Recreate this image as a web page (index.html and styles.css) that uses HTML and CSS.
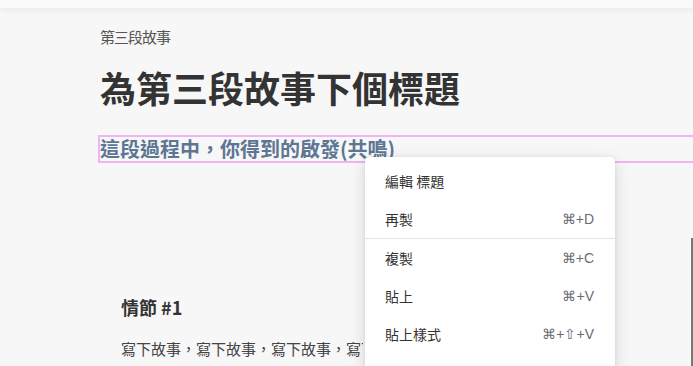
FILE: index.html
```html
<!DOCTYPE html>
<html lang="zh-Hant">
<head>
    <meta charset="UTF-8">
    <meta name="viewport" content="width=device-width, initial-scale=1.0">
    <title>故事編輯器</title>
    <link rel="stylesheet" href="styles.css">
</head>
<body>
    <div class="topbar"></div>

    <main class="story">
        <div class="section-label">第三段故事</div>
        <h1 class="story-title">為第三段故事下個標題</h1>
        <div class="subtitle-box">
            <h2 class="story-subtitle">這段過程中，你得到的啟發(共鳴)</h2>
        </div>

        <div class="plot">
            <h3 class="plot-title">情節 #1</h3>
            <p class="plot-text">寫下故事，寫下故事，寫下故事，寫下故事，寫下故事</p>
        </div>
    </main>

    <div class="side-panel"></div>

    <!-- Context menu -->
    <ul class="context-menu">
        <li class="menu-item"><span>編輯 標題</span></li>
        <li class="menu-item"><span>再製</span><span class="shortcut">⌘+D</span></li>
        <li class="menu-divider"></li>
        <li class="menu-item"><span>複製</span><span class="shortcut">⌘+C</span></li>
        <li class="menu-item"><span>貼上</span><span class="shortcut">⌘+V</span></li>
        <li class="menu-item"><span>貼上樣式</span><span class="shortcut">⌘+⇧+V</span></li>
        <li class="menu-item"><span>從範本加入項目</span></li>
    </ul>
</body>
</html>
```

FILE: styles.css
```css
* {
    box-sizing: border-box;
}

html, body {
    height: 100%;
}

body {
    margin: 0;
    background-color: #f7f7f7;
    font-family: "Noto Sans CJK TC", "Noto Sans", sans-serif;
    color: #333;
    overflow: hidden;
    position: relative;
}

.topbar {
    height: 8px;
    background-color: #fafafa;
    box-shadow: 0 2px 6px rgba(0, 0, 0, 0.06);
}

.story {
    padding-left: 100px;
}

.section-label {
    margin-top: 19px;
    font-size: 15px;
    line-height: 20px;
    color: #555;
    letter-spacing: -1px;
}

.story-title {
    margin: 20px 0 0;
    font-size: 36px;
    line-height: 40px;
    font-weight: 700;
    color: #333;
}

.subtitle-box {
    margin: 28px -20px 0 -2px;
    border: 2px solid #f2b3f2;
    border-right: none;
}

.story-subtitle {
    margin: 0;
    font-size: 20px;
    line-height: 24px;
    font-weight: 700;
    color: #5d7694;
}

.plot {
    padding-left: 21px;
    margin-top: 132px;
}

.plot-title {
    margin: 0;
    font-size: 18px;
    line-height: 24px;
    font-weight: 700;
    color: #333;
}

.plot-text {
    margin: 18px 0 0;
    width: 242px;
    overflow: hidden;
    font-size: 15px;
    line-height: 24px;
    color: #444;
    white-space: nowrap;
}

.side-panel {
    position: absolute;
    left: 691px;
    top: 238px;
    width: 10px;
    height: 200px;
    background-color: #fff;
    border-left: 2px solid #777;
}

.context-menu {
    position: absolute;
    left: 365px;
    top: 157px;
    width: 250px;
    margin: 0;
    padding: 5px 0;
    list-style: none;
    background-color: #fff;
    border-radius: 5px;
    box-shadow: 0 4px 16px rgba(0, 0, 0, 0.14), 0 0 4px rgba(0, 0, 0, 0.06);
}

.menu-item {
    display: flex;
    justify-content: space-between;
    align-items: center;
    height: 38px;
    padding: 0 21px 0 20px;
    font-size: 14px;
    color: #333;
}

.shortcut {
    font-family: "Liberation Sans", "Noto Sans", sans-serif;
    font-size: 14px;
    color: #6b6b75;
}

.menu-divider {
    height: 1px;
    margin: 0;
    background-color: #e3e3e3;
}
```
